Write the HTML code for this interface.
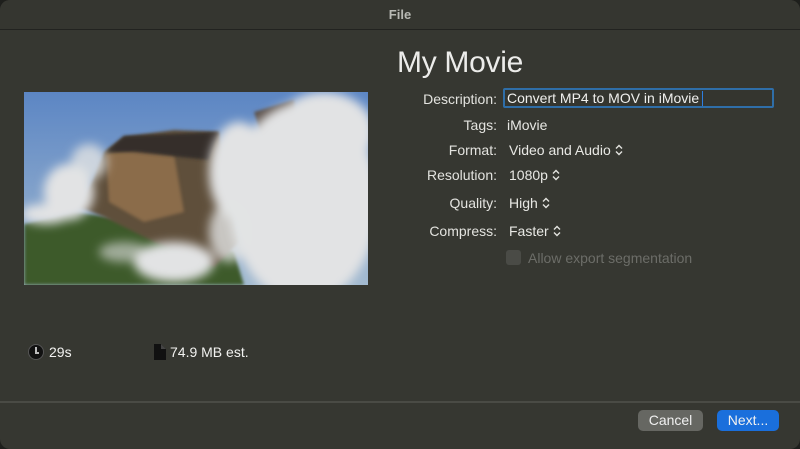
<!DOCTYPE html>
<html><head><meta charset="utf-8"><style>
*{margin:0;padding:0;box-sizing:border-box}
body{width:800px;height:449px;background:#1e1f1c;font-family:"Liberation Sans",sans-serif;overflow:hidden;position:relative}
.win{position:absolute;left:0;top:0;width:800px;height:449px;background:#363731;border-radius:10px;overflow:hidden}
.tb{position:absolute;left:0;top:0;width:800px;height:30px;background:#353630;border-bottom:1px solid #222320;text-align:center;color:#b8b9b4;font-weight:bold;font-size:13px;line-height:30px}
.t{position:absolute;color:#e8e8e4;font-size:14px;white-space:nowrap}
.lab{position:absolute;right:303px;color:#e3e3df;font-size:14px;white-space:nowrap}
.chev{display:inline-block;width:8px;height:12px;margin-left:4px;vertical-align:-1px}
.sep{position:absolute;left:0;top:401px;width:800px;height:2px;background:#4a4b45}
.btn{position:absolute;top:410px;height:21px;border-radius:5px;color:#f0f0f0;font-size:14px;text-align:center;line-height:21px}
</style></head><body>
<div class="win">
<div class="tb">File</div>
<div class="t" style="left:397px;top:46px;font-size:30px;color:#ececea;letter-spacing:-0.3px">My Movie</div>
<svg style="position:absolute;left:24px;top:92px" width="344" height="193" viewBox="0 0 344 193">
<defs>
<linearGradient id="sky" x1="0" y1="0" x2="0" y2="1"><stop offset="0" stop-color="#5c86c4"/><stop offset="1" stop-color="#a3bad0"/></linearGradient>
<filter id="b"><feGaussianBlur stdDeviation="5"/></filter>
<filter id="b2"><feGaussianBlur stdDeviation="1.5"/></filter>
<clipPath id="c"><rect width="344" height="193"/></clipPath>
</defs>
<g clip-path="url(#c)">
<rect width="344" height="193" fill="url(#sky)"/>
<path d="M0 132 L50 120 L120 130 L210 160 L220 193 L0 193Z" fill="#3c5a2a" filter="url(#b2)"/>
<path d="M55 115 L70 85 L80 60 L100 45 L150 38 L195 40 L205 100 L215 150 L190 175 L130 150 L80 125Z" fill="#5f4f3b" filter="url(#b2)"/>
<path d="M82 62 L120 55 L150 62 L160 120 L120 130 L85 110Z" fill="#9a7650" filter="url(#b2)" opacity=".75"/>
<path d="M100 44 L195 40 L185 68 L110 60 L82 60Z" fill="#342f2a" filter="url(#b2)"/>
<path d="M230 20 L270 8 L275 40 L240 50Z" fill="#5a5048" filter="url(#b2)"/>
<g fill="#e2e3e4" filter="url(#b)">
<ellipse cx="280" cy="110" rx="75" ry="100"/>
<ellipse cx="300" cy="40" rx="50" ry="40"/>
<ellipse cx="215" cy="80" rx="30" ry="50"/>
<ellipse cx="205" cy="140" rx="20" ry="30" opacity=".8"/>
<ellipse cx="45" cy="100" rx="25" ry="28"/>
<ellipse cx="22" cy="122" rx="25" ry="10"/>
<ellipse cx="65" cy="70" rx="18" ry="18" opacity=".8"/>
<ellipse cx="150" cy="170" rx="40" ry="20"/>
<ellipse cx="100" cy="160" rx="25" ry="10" opacity=".6"/>
</g>
</g>
</svg>
<div class="lab" style="top:91px">Description:</div>
<div style="position:absolute;left:503px;top:88px;width:271px;height:20px;border:2px solid #2f6ea8;border-radius:2px;background:#34352f"></div>
<div class="t" style="left:507px;top:90px;color:#f0f0ee">Convert MP4 to MOV in iMovie</div>
<div style="position:absolute;left:702px;top:91px;width:1px;height:15px;background:#2d7ee0"></div>
<div class="lab" style="top:117px">Tags:</div><div class="t" style="left:507px;top:117px">iMovie</div>
<div class="lab" style="top:142px">Format:</div><div class="t" style="left:509px;top:142px">Video and Audio<svg class="chev" viewBox="0 0 8 12"><path d="M1 4.5L4 1.5L7 4.5M1 7.5L4 10.5L7 7.5" fill="none" stroke="#e3e3df" stroke-width="1.4"/></svg></div>
<div class="lab" style="top:167px">Resolution:</div><div class="t" style="left:509px;top:167px">1080p<svg class="chev" viewBox="0 0 8 12"><path d="M1 4.5L4 1.5L7 4.5M1 7.5L4 10.5L7 7.5" fill="none" stroke="#e3e3df" stroke-width="1.4"/></svg></div>
<div class="lab" style="top:195px">Quality:</div><div class="t" style="left:509px;top:195px">High<svg class="chev" viewBox="0 0 8 12"><path d="M1 4.5L4 1.5L7 4.5M1 7.5L4 10.5L7 7.5" fill="none" stroke="#e3e3df" stroke-width="1.4"/></svg></div>
<div class="lab" style="top:223px">Compress:</div><div class="t" style="left:509px;top:223px">Faster<svg class="chev" viewBox="0 0 8 12"><path d="M1 4.5L4 1.5L7 4.5M1 7.5L4 10.5L7 7.5" fill="none" stroke="#e3e3df" stroke-width="1.4"/></svg></div>
<div style="position:absolute;left:506px;top:250px;width:15px;height:15px;border-radius:3px;background:#4a4b46"></div>
<div class="t" style="left:528px;top:250px;color:#6c6d68">Allow export segmentation</div>
<div style="position:absolute;left:28px;top:344px;width:16px;height:16px;border-radius:50%;background:#111;border:1px solid #555"></div>
<div style="position:absolute;left:35px;top:347px;width:1.5px;height:6px;background:#bbb"></div>
<div style="position:absolute;left:35px;top:352px;width:4px;height:1.5px;background:#bbb"></div>
<div class="t" style="left:49px;top:344px;color:#f2f2f0">29s</div>
<svg style="position:absolute;left:154px;top:344px" width="12" height="16"><path d="M0 0H7L12 5V16H0Z" fill="#111"/><path d="M7 0V5H12" fill="#444"/></svg>
<div class="t" style="left:170px;top:344px;color:#f2f2f0">74.9 MB est.</div>
<div class="sep"></div>
<div class="btn" style="left:638px;width:65px;background:#666762">Cancel</div>
<div class="btn" style="left:717px;width:62px;background:#1a6fdc">Next...</div>
</div>
</body></html>
